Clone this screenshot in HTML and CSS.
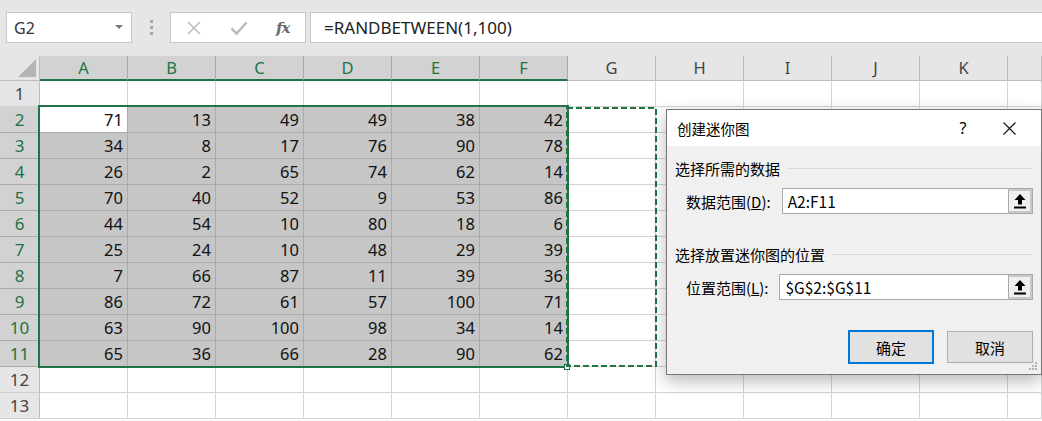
FILE: index.html
```html
<!DOCTYPE html>
<html lang="zh-CN">
<head>
    <meta charset="UTF-8">
    <meta name="viewport" content="width=device-width, initial-scale=1.0">
    <title>创建迷你图</title>
    <link rel="stylesheet" href="styles.css">
</head>
<body>
<div class="app">
    <div class="toolbar">
        <div class="namebox">
            <span>G2</span>
            <svg width="8" height="5" viewBox="0 0 8 5"><polygon points="0,0 8,0 4,4" fill="#777"/></svg>
        </div>
        <div class="dots"><i></i><i></i><i></i></div>
        <div class="fx-box">
            <svg class="tb-icon" width="16" height="16" viewBox="0 0 16 16"><path d="M2 2 L14 14 M14 2 L2 14" stroke="#bdbdbd" stroke-width="1.6" fill="none"/></svg>
            <svg class="tb-icon" width="18" height="16" viewBox="0 0 18 16"><path d="M1.5 8.5 L6.5 13.5 L16.5 2.5" stroke="#bdbdbd" stroke-width="2.6" fill="none"/></svg>
            <span class="fx">fx</span>
        </div>
        <div class="formula">=RANDBETWEEN(1,100)</div>
    </div>

    <div class="sheet">
        <div class="grid">
            <div class="corner"><svg width="18" height="18" viewBox="0 0 18 18"><polygon points="18,0 18,18 0,18" fill="#b5b5b5"/></svg></div>
            <div class="ch on">A</div><div class="ch on">B</div><div class="ch on">C</div><div class="ch on">D</div><div class="ch on">E</div><div class="ch on">F</div>
            <div class="ch">G</div><div class="ch">H</div><div class="ch">I</div><div class="ch">J</div><div class="ch">K</div><div class="ch"></div>

            <div class="rh">1</div>
            <div class="c"></div><div class="c"></div><div class="c"></div><div class="c"></div><div class="c"></div><div class="c"></div>
            <div class="c"></div><div class="c"></div><div class="c"></div><div class="c"></div><div class="c"></div><div class="c"></div>

            <div class="rh on">2</div>
            <div class="c act">71</div><div class="c s">13</div><div class="c s">49</div><div class="c s">49</div><div class="c s">38</div><div class="c s">42</div>
            <div class="c"></div><div class="c"></div><div class="c"></div><div class="c"></div><div class="c"></div><div class="c"></div>

            <div class="rh on">3</div>
            <div class="c s">34</div><div class="c s">8</div><div class="c s">17</div><div class="c s">76</div><div class="c s">90</div><div class="c s">78</div>
            <div class="c"></div><div class="c"></div><div class="c"></div><div class="c"></div><div class="c"></div><div class="c"></div>

            <div class="rh on">4</div>
            <div class="c s">26</div><div class="c s">2</div><div class="c s">65</div><div class="c s">74</div><div class="c s">62</div><div class="c s">14</div>
            <div class="c"></div><div class="c"></div><div class="c"></div><div class="c"></div><div class="c"></div><div class="c"></div>

            <div class="rh on">5</div>
            <div class="c s">70</div><div class="c s">40</div><div class="c s">52</div><div class="c s">9</div><div class="c s">53</div><div class="c s">86</div>
            <div class="c"></div><div class="c"></div><div class="c"></div><div class="c"></div><div class="c"></div><div class="c"></div>

            <div class="rh on">6</div>
            <div class="c s">44</div><div class="c s">54</div><div class="c s">10</div><div class="c s">80</div><div class="c s">18</div><div class="c s">6</div>
            <div class="c"></div><div class="c"></div><div class="c"></div><div class="c"></div><div class="c"></div><div class="c"></div>

            <div class="rh on">7</div>
            <div class="c s">25</div><div class="c s">24</div><div class="c s">10</div><div class="c s">48</div><div class="c s">29</div><div class="c s">39</div>
            <div class="c"></div><div class="c"></div><div class="c"></div><div class="c"></div><div class="c"></div><div class="c"></div>

            <div class="rh on">8</div>
            <div class="c s">7</div><div class="c s">66</div><div class="c s">87</div><div class="c s">11</div><div class="c s">39</div><div class="c s">36</div>
            <div class="c"></div><div class="c"></div><div class="c"></div><div class="c"></div><div class="c"></div><div class="c"></div>

            <div class="rh on">9</div>
            <div class="c s">86</div><div class="c s">72</div><div class="c s">61</div><div class="c s">57</div><div class="c s">100</div><div class="c s">71</div>
            <div class="c"></div><div class="c"></div><div class="c"></div><div class="c"></div><div class="c"></div><div class="c"></div>

            <div class="rh on">10</div>
            <div class="c s">63</div><div class="c s">90</div><div class="c s">100</div><div class="c s">98</div><div class="c s">34</div><div class="c s">14</div>
            <div class="c"></div><div class="c"></div><div class="c"></div><div class="c"></div><div class="c"></div><div class="c"></div>

            <div class="rh on">11</div>
            <div class="c s">65</div><div class="c s">36</div><div class="c s">66</div><div class="c s">28</div><div class="c s">90</div><div class="c s">62</div>
            <div class="c"></div><div class="c"></div><div class="c"></div><div class="c"></div><div class="c"></div><div class="c"></div>

            <div class="rh">12</div>
            <div class="c"></div><div class="c"></div><div class="c"></div><div class="c"></div><div class="c"></div><div class="c"></div>
            <div class="c"></div><div class="c"></div><div class="c"></div><div class="c"></div><div class="c"></div><div class="c"></div>

            <div class="rh">13</div>
            <div class="c"></div><div class="c"></div><div class="c"></div><div class="c"></div><div class="c"></div><div class="c"></div>
            <div class="c"></div><div class="c"></div><div class="c"></div><div class="c"></div><div class="c"></div><div class="c"></div>
        </div>

        <!-- selection and copy marquee drawn over the cells -->
        <div class="selection"></div>
        <div class="fill-handle"></div>
        <svg class="marquee" width="91" height="260" viewBox="0 0 91 260">
            <rect x="1" y="1" width="89" height="258" fill="none" stroke="#217346" stroke-width="2" stroke-dasharray="6 3"/>
        </svg>
    </div>

    <div class="dialog">
        <div class="dlg-title">
            <span class="dlg-name">创建迷你图</span>
            <span class="dlg-btn help">?</span>
            <span class="dlg-btn"><svg width="13" height="13" viewBox="0 0 13 13"><path d="M0.5 0.5 L12.5 12.5 M12.5 0.5 L0.5 12.5" stroke="#111" stroke-width="1.1" fill="none"/></svg></span>
        </div>
        <div class="dlg-body">
            <div class="group">选择所需的数据</div>
            <div class="field">
                <span class="label">数据范围(<u>D</u>):</span>
                <div class="ref-input">
                    <span class="ref-text">A2:F11</span>
                    <span class="ref-btn"><svg width="12" height="15" viewBox="0 0 12 15"><polygon points="6,0 11.5,6 8,6 8,10.5 4,10.5 4,6 0.5,6" fill="#000"/><rect x="0" y="12.5" width="12" height="2" fill="#000"/></svg></span>
                </div>
            </div>
            <div class="group g2">选择放置迷你图的位置</div>
            <div class="field">
                <span class="label">位置范围(<u>L</u>):</span>
                <div class="ref-input">
                    <span class="ref-text">$G$2:$G$11</span>
                    <span class="ref-btn"><svg width="12" height="15" viewBox="0 0 12 15"><polygon points="6,0 11.5,6 8,6 8,10.5 4,10.5 4,6 0.5,6" fill="#000"/><rect x="0" y="12.5" width="12" height="2" fill="#000"/></svg></span>
                </div>
            </div>
            <div class="actions">
                <button class="primary">确定</button>
                <button>取消</button>
            </div>
        </div>
        <svg class="grip" width="9" height="9" viewBox="0 0 9 9">
            <rect x="6" y="0" width="2" height="2" fill="#b3b3b3"/>
            <rect x="3" y="3" width="2" height="2" fill="#b3b3b3"/>
            <rect x="6" y="3" width="2" height="2" fill="#b3b3b3"/>
            <rect x="0" y="6" width="2" height="2" fill="#b3b3b3"/>
            <rect x="3" y="6" width="2" height="2" fill="#b3b3b3"/>
            <rect x="6" y="6" width="2" height="2" fill="#b3b3b3"/>
        </svg>
    </div>
</div>
</body>
</html>
```

FILE: styles.css
```css
body {
    margin: 0;
    font-family: "Noto Sans", "Noto Sans CJK SC", sans-serif;
    background-color: #fff;
    overflow: hidden;
}

.app {
    position: relative;
    width: 1042px;
    height: 421px;
    overflow: hidden;
}

/* formula bar */
.toolbar {
    height: 56px;
    box-sizing: border-box;
    padding-top: 12px;
    display: flex;
    align-items: flex-start;
    background-color: #e6e6e6;
}

.namebox {
    margin-left: 6px;
    width: 126px;
    height: 31px;
    box-sizing: border-box;
    border: 1px solid #c8c8c8;
    background-color: #fff;
    display: flex;
    align-items: center;
    justify-content: space-between;
    padding: 0 8px 0 7px;
    font-size: 16px;
    color: #333;
}

.dots {
    width: 38px;
    height: 31px;
    display: flex;
    flex-direction: column;
    align-items: center;
    justify-content: center;
    gap: 3px;
}

.dots i {
    display: block;
    width: 3px;
    height: 3px;
    background-color: #a8a8a8;
}

.fx-box {
    width: 136px;
    height: 31px;
    box-sizing: border-box;
    border: 1px solid #c8c8c8;
    background-color: #fff;
    display: flex;
    align-items: center;
    padding-left: 15px;
    gap: 28px;
}

.fx {
    font-family: "DejaVu Serif", serif;
    font-style: italic;
    font-weight: bold;
    font-size: 15px;
    color: #6a6a6a;
    letter-spacing: -1px;
}

.formula {
    flex: 1;
    margin-left: 4px;
    height: 31px;
    box-sizing: border-box;
    border: 1px solid #c8c8c8;
    border-right: none;
    background-color: #fff;
    padding-left: 13px;
    font-size: 17px;
    line-height: 29px;
    color: #222;
}

/* sheet */
.sheet {
    position: relative;
}

.grid {
    display: grid;
    grid-template-columns: 40px repeat(11, 88px) 1fr;
    grid-template-rows: 25px;
    grid-auto-rows: 26px;
}

.grid > div {
    box-sizing: border-box;
    border-right: 1px solid #d4d4d4;
    border-bottom: 1px solid #d4d4d4;
}

.corner {
    background-color: #e6e6e6;
    display: flex;
    align-items: flex-end;
    justify-content: flex-end;
    padding: 0 3px 3px 0;
}

.grid > .corner {
    border-right-color: #bdbdbd;
    border-bottom-color: #bdbdbd;
}

.grid > .ch {
    background-color: #e6e6e6;
    border-right-color: #bdbdbd;
    border-bottom-color: #bdbdbd;
    text-align: center;
    font-size: 16.5px;
    line-height: 24px;
    color: #444;
}

.grid > .ch.on {
    background-color: #d2d2d2;
    color: #217346;
    border-bottom: 2px solid #217346;
    border-right-color: #ababab;
}

.grid > .rh {
    background-color: #e6e6e6;
    border-right-color: #bdbdbd;
    border-bottom-color: #cfcfcf;
    text-align: center;
    font-size: 17px;
    line-height: 25px;
    color: #444;
}

.grid > .rh.on {
    background-color: #d2d2d2;
    color: #217346;
    border-bottom-color: #ababab;
}

.c {
    text-align: right;
    padding-right: 4px;
    font-size: 16.5px;
    line-height: 25px;
    color: #111;
}

.grid > .c.s {
    background-color: #c6c6c6;
    border-right-color: #ababab;
    border-bottom-color: #ababab;
}

.grid > .c.act {
    background-color: #fff;
    border-right-color: #ababab;
    border-bottom-color: #ababab;
}

.selection {
    position: absolute;
    left: 38px;
    top: 49px;
    width: 531px;
    height: 263px;
    box-sizing: border-box;
    border: 2px solid #217346;
    pointer-events: none;
}

.fill-handle {
    position: absolute;
    left: 564px;
    top: 308px;
    width: 6px;
    height: 6px;
    box-sizing: border-box;
    background-color: #fff;
    border: 1px solid #217346;
}

.marquee {
    position: absolute;
    left: 566px;
    top: 51px;
}

/* sparkline dialog */
.dialog {
    position: absolute;
    left: 666px;
    top: 109px;
    width: 376px;
    height: 266px;
    box-sizing: border-box;
    border: 1px solid #767676;
    background-color: #f0f0f0;
    box-shadow: 0 6px 16px rgba(0, 0, 0, 0.28);
    font-family: "Noto Sans CJK SC", "Noto Sans", sans-serif;
    color: #000;
}

.dlg-title {
    height: 36px;
    background-color: #fff;
    display: flex;
    align-items: center;
    padding: 0 9px 0 10px;
}

.dlg-name {
    flex: 1;
    font-size: 14.5px;
}

.dlg-btn {
    width: 46px;
    height: 36px;
    display: flex;
    align-items: center;
    justify-content: center;
}

.help {
    font-family: "Noto Sans", sans-serif;
    font-size: 16px;
}

.dlg-body {
    padding: 0 8px 0 8px;
}

.group {
    margin-top: 12px;
    display: flex;
    align-items: center;
    font-size: 15px;
    line-height: 21px;
}

.group::after {
    content: "";
    flex: 1;
    height: 1px;
    margin-left: 7px;
    background-color: #dadada;
}

.group.g2 {
    margin-top: 30px;
}

.field {
    margin-top: 9px;
    display: flex;
    align-items: center;
    padding-left: 11px;
    font-size: 15px;
}

.label {
    margin-right: 11px;
}

.ref-input {
    flex: 1;
    height: 26px;
    box-sizing: border-box;
    border: 1px solid #a9a9a9;
    background-color: #fff;
    display: flex;
    align-items: center;
}

.ref-text {
    flex: 1;
    padding-left: 5px;
    font-size: 15.5px;
}

.ref-btn {
    width: 24px;
    height: 24px;
    box-sizing: border-box;
    border: 2px solid #c8c8c8;
    border-left: 1px solid #a9a9a9;
    background-color: #f0f0f0;
    display: flex;
    align-items: center;
    justify-content: center;
}

.actions {
    margin-top: 30px;
    display: flex;
    justify-content: flex-end;
    align-items: center;
    gap: 13px;
}

button {
    width: 86px;
    height: 32px;
    box-sizing: border-box;
    border: 1px solid #adadad;
    background-color: #e1e1e1;
    font-family: "Noto Sans CJK SC", sans-serif;
    font-size: 15px;
    color: #000;
    padding: 0;
}

button.primary {
    height: 34px;
    border: 2px solid #0078d7;
}

.grip {
    position: absolute;
    right: 3px;
    bottom: 3px;
}
```
